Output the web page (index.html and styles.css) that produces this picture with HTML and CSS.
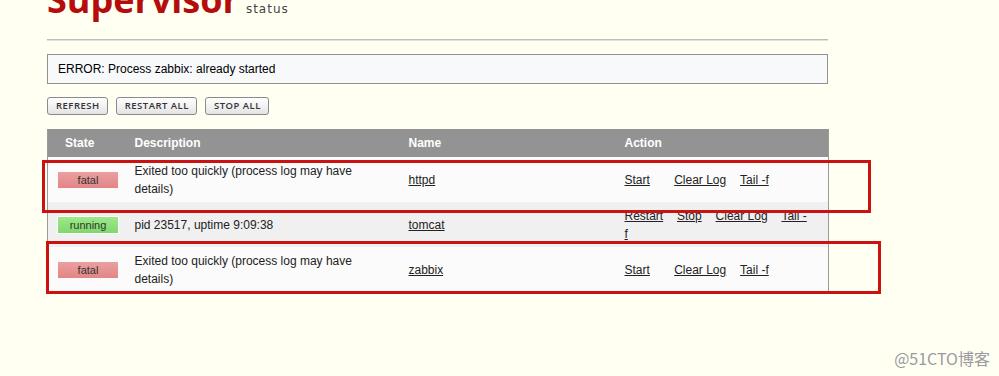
FILE: index.html
```html
<!DOCTYPE html>
<html lang="en">
<head>
    <meta charset="UTF-8">
    <title>Supervisor Status</title>
    <link rel="stylesheet" href="styles.css">
</head>
<body>
    <div class="page">
        <div class="masthead">
            <span class="logo">Supervisor</span>
            <span class="tag">status</span>
        </div>
        <div class="rule"></div>

        <div class="message">ERROR: Process zabbix: already started</div>

        <div class="buttons">
            <a class="btn" href="#">Refresh</a>
            <a class="btn" href="#">Restart All</a>
            <a class="btn" href="#">Stop All</a>
        </div>

        <table class="procs">
            <colgroup>
                <col class="c-state">
                <col class="c-desc">
                <col class="c-name">
                <col class="c-action">
            </colgroup>
            <thead>
                <tr>
                    <th class="state">State</th>
                    <th>Description</th>
                    <th>Name</th>
                    <th>Action</th>
                </tr>
            </thead>
            <tbody>
                <tr>
                    <td><span class="status fatal">fatal</span></td>
                    <td>Exited too quickly (process log may have details)</td>
                    <td><a href="#">httpd</a></td>
                    <td class="action">
                        <ul>
                            <li><a href="#">Start</a></li>
                            <li></li>
                            <li><a href="#">Clear Log</a></li>
                            <li><a href="#">Tail -f</a></li>
                        </ul>
                    </td>
                </tr>
                <tr class="shade">
                    <td><span class="status running">running</span></td>
                    <td>pid 23517, uptime 9:09:38</td>
                    <td><a href="#">tomcat</a></td>
                    <td class="action">
                        <ul>
                            <li><a href="#">Restart</a></li>
                            <li><a href="#">Stop</a></li>
                            <li><a href="#">Clear Log</a></li>
                            <li><a href="#">Tail -f</a></li>
                        </ul>
                    </td>
                </tr>
                <tr>
                    <td><span class="status fatal">fatal</span></td>
                    <td>Exited too quickly (process log may have details)</td>
                    <td><a href="#">zabbix</a></td>
                    <td class="action">
                        <ul>
                            <li><a href="#">Start</a></li>
                            <li></li>
                            <li><a href="#">Clear Log</a></li>
                            <li><a href="#">Tail -f</a></li>
                        </ul>
                    </td>
                </tr>
            </tbody>
        </table>
    </div>

    <!-- annotation boxes drawn over the screenshot -->
    <div class="mark mark-one"></div>
    <div class="mark mark-two"></div>

    <div class="watermark">@51CTO博客</div>
</body>
</html>
```

FILE: styles.css
```css
body {
    margin: 0;
    background-color: #fffff2;
    font-family: "Liberation Sans", Arial, sans-serif;
    font-size: 12px;
    color: #222;
}
.page {
    width: 781px;
    padding-left: 47px;
}
.masthead {
    display: flex;
    align-items: baseline;
    gap: 7px;
    height: 35px;
    margin-top: -18px;
}
.logo {
    font-family: "Open Sans", sans-serif;
    font-weight: 700;
    font-size: 36px;
    line-height: 35px;
    color: #b50c0c;
}
.tag {
    font-family: "DejaVu Sans", sans-serif;
    font-size: 12px;
    letter-spacing: 1px;
    color: #444;
}
.rule {
    margin-top: 22px;
    border-top: 1px solid #bcbcbc;
    border-bottom: 1px solid #e2e2dc;
}
.message {
    margin-top: 13px;
    height: 28px;
    line-height: 28px;
    padding: 0 10px;
    border: 1px solid #919191;
    background-color: #f8f9fb;
    color: #000;
}
.buttons {
    display: flex;
    gap: 8px;
    margin-top: 13px;
}
.btn {
    box-sizing: border-box;
    height: 18px;
    line-height: 16px;
    padding: 0 7px 0 8px;
    border: 1px solid #8a8a8a;
    border-radius: 3px;
    background: linear-gradient(#ffffff, #e4e4e4);
    font-family: "Open Sans", sans-serif;
    font-size: 9.5px;
    font-weight: 600;
    letter-spacing: 0.5px;
    text-transform: uppercase;
    text-decoration: none;
    color: #333;
}
.procs {
    width: 781px;
    margin-top: 14px;
    border-collapse: collapse;
    table-layout: fixed;
    border-left: 1px solid #999;
    border-right: 1px solid #999;
}
.c-state { width: 77px; }
.c-desc { width: 274px; }
.c-name { width: 216px; }
.c-action { width: 214px; }
.procs th {
    height: 28px;
    padding: 0 10px;
    background-color: #939393;
    color: #fff;
    font-weight: bold;
    text-align: left;
}
.procs th.state {
    padding-left: 17px;
}
.procs td {
    padding: 5px 10px 4px;
    line-height: 18px;
    vertical-align: middle;
    background-color: #fbfbfb;
}
.procs tr.shade td {
    background-color: #f0f0f0;
}
.procs a {
    color: #222;
}
.status {
    display: block;
    box-sizing: border-box;
    width: 60px;
    height: 16px;
    line-height: 16px;
    text-align: center;
    font-size: 11px;
    color: #333;
}
.fatal {
    background: linear-gradient(#eba0a0, #e28585);
}
.running {
    width: 62px;
    height: 18px;
    margin-left: -1px;
    border: 1px solid #fff;
    background: linear-gradient(#9de98a, #7fd86c);
}
.action ul {
    margin: 0;
    padding: 0;
    list-style: none;
}
.action li {
    display: inline;
    padding-right: 10.5px;
}
.mark {
    position: absolute;
    border: 3px solid #cc1111;
    box-sizing: border-box;
}
.mark-one {
    left: 42px;
    top: 160px;
    width: 829px;
    height: 53px;
}
.mark-two {
    left: 46px;
    top: 241px;
    width: 835px;
    height: 53px;
}
.watermark {
    position: absolute;
    right: 9px;
    top: 346px;
    font-family: "Noto Sans CJK SC", sans-serif;
    font-size: 16px;
    color: #9a9a9a;
    text-shadow: 0 0 2px #fff;
}
```
